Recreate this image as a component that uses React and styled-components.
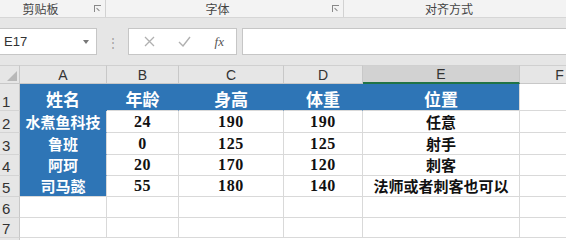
import styled, { createGlobalStyle } from "styled-components";

const GlobalStyle = createGlobalStyle`
  html, body {
    margin: 0;
    padding: 0;
    background: #ffffff;
    overflow: hidden;
  }
`;

const SANS = `"Microsoft YaHei", "Noto Sans CJK SC", "Liberation Sans", sans-serif`;
const BLUE = "#2e75b6";
const GRID = "#d9d9d9";

const columns = [
  { key: "A", width: 87 },
  { key: "B", width: 72 },
  { key: "C", width: 105 },
  { key: "D", width: 79 },
  { key: "E", width: 157 },
  { key: "F", width: 80 },
];

const rows = [
  { n: 1, h: 27, cells: ["姓名", "年龄", "身高", "体重", "位置"] },
  { n: 2, h: 22, cells: ["水煮鱼科技", "24", "190", "190", "任意"] },
  { n: 3, h: 22, cells: ["鲁班", "0", "125", "125", "射手"] },
  { n: 4, h: 21, cells: ["阿珂", "20", "170", "120", "刺客"] },
  { n: 5, h: 21, cells: ["司马懿", "55", "180", "140", "法师或者刺客也可以"] },
  { n: 6, h: 21, cells: [] },
  { n: 7, h: 20, cells: [] },
];

const Page = styled.div`
  width: 566px;
  height: 240px;
  overflow: hidden;
  background: #e6e6e6;
  font-family: ${SANS};
`;

const Ribbon = styled.div`
  display: flex;
  height: 17px;
  background: #f3f3f3;
  border-bottom: 1px solid #d6d6d6;
`;

const Group = styled.div`
  position: relative;
  width: ${(p) => p.width}px;
  flex: none;
  display: flex;
  align-items: center;
  justify-content: center;
  padding-right: ${(p) => p.pad}px;
  box-sizing: border-box;
  border-right: ${(p) => (p.last ? "none" : "1px solid #d2d2d2")};
  font-size: 12px;
  color: #444;
  line-height: 1;
`;

const Launcher = styled.span`
  position: absolute;
  right: 4px;
  top: 5px;
  width: 6px;
  height: 6px;
  border-left: 1px solid #888;
  border-top: 1px solid #888;
  &::after {
    content: "";
    position: absolute;
    left: 1px;
    top: 1px;
    width: 4px;
    height: 1px;
    background: #888;
    transform: translate(0px, 2px) rotate(45deg);
  }
`;

const FormulaBar = styled.div`
  display: flex;
  align-items: stretch;
  height: 27px;
  margin-top: 10px;
  margin-bottom: 10px;
`;

const NameBox = styled.div`
  width: 97px;
  box-sizing: border-box;
  background: #fff;
  border: 1px solid #c6c6c6;
  border-left: none;
  display: flex;
  align-items: center;
  justify-content: space-between;
  padding: 0 7px 0 4px;
  font-family: "Liberation Sans", sans-serif;
  font-size: 13px;
  color: #333;
`;

const Caret = styled.span`
  width: 0;
  height: 0;
  border-left: 3px solid transparent;
  border-right: 3px solid transparent;
  border-top: 4px solid #777;
`;

const Grip = styled.div`
  width: 31px;
  display: flex;
  align-items: center;
  justify-content: center;
  color: #a0a0a0;
  font-size: 12px;
`;

const ActionBox = styled.div`
  width: 109px;
  box-sizing: border-box;
  background: #fff;
  border: 1px solid #c6c6c6;
  display: flex;
  align-items: center;
  justify-content: space-between;
  padding: 0 12px 0 15px;
`;

const FxLabel = styled.span`
  font-family: "Liberation Serif", serif;
  font-style: italic;
  font-size: 13px;
  color: #555;
`;

const FormulaInput = styled.div`
  flex: 1;
  margin-left: 5px;
  background: #fff;
  border: 1px solid #c6c6c6;
  border-right: none;
`;

const Sheet = styled.div`
  display: grid;
  grid-template-columns: 20px ${columns.map((c) => c.width + "px").join(" ")};
  grid-template-rows: 19px ${rows.map((r) => r.h + "px").join(" ")} 1fr;
  height: 176px;
  background: #fff;
`;

const Corner = styled.div`
  position: relative;
  background: #e6e6e6;
  border-right: 1px solid #c8c8c8;
  border-bottom: 1px solid #c8c8c8;
  border-top: 1px solid #d0d0d0;
  &::after {
    content: "";
    position: absolute;
    right: 2px;
    bottom: 2px;
    width: 0;
    height: 0;
    border-left: 10px solid transparent;
    border-bottom: 10px solid #b8b8b8;
  }
`;

const ColHead = styled.div`
  background: ${(p) => (p.selected ? "#d2d2d2" : "#e6e6e6")};
  border-top: 1px solid #d0d0d0;
  border-right: 1px solid #c8c8c8;
  border-bottom: ${(p) => (p.selected ? "2px solid #217346" : "1px solid #c8c8c8")};
  display: flex;
  align-items: center;
  justify-content: center;
  font-family: "Liberation Sans", sans-serif;
  font-size: 14px;
  color: #333;
`;

const RowHead = styled.div`
  background: #e6e6e6;
  border-right: 1px solid #c8c8c8;
  border-bottom: 1px solid #d4d4d4;
  display: flex;
  align-items: flex-end;
  padding-left: 2px;
  padding-bottom: 1px;
  font-family: "Liberation Sans", sans-serif;
  font-size: 15px;
  color: #333;
  line-height: 1;
`;

const Cell = styled.div`
  box-sizing: border-box;
  background: ${(p) => (p.$blue ? BLUE : "#fff")};
  border-right: 1px solid ${(p) => (p.$blue && p.$joinRight ? BLUE : GRID)};
  border-bottom: 1px solid ${(p) => (p.$blue && p.$joinBottom ? BLUE : GRID)};
  display: flex;
  align-items: flex-end;
  justify-content: center;
  padding-bottom: 1px;
  color: ${(p) => (p.$blue ? "#fff" : "#111")};
  font-family: ${(p) => (p.$num ? `"Liberation Serif", serif` : SANS)};
  font-weight: 700;
  font-size: ${(p) => p.$size}px;
  letter-spacing: ${(p) => (p.$num ? "0.6px" : "0")};
  line-height: 1.2;
  white-space: nowrap;
`;

const isNum = (v) => /^\d+$/.test(v);

const App = () => {
  return (
    <>
      <GlobalStyle />
      <Page>
        <Ribbon>
          <Group width={106} pad={24}>
            剪贴板
            <Launcher />
          </Group>
          <Group width={238} pad={14}>
            字体
            <Launcher />
          </Group>
          <Group width={222} pad={12} last>
            对齐方式
          </Group>
        </Ribbon>

        <FormulaBar>
          <NameBox>
            E17
            <Caret />
          </NameBox>
          <Grip>⋮</Grip>
          <ActionBox>
            <svg width="11" height="11" viewBox="0 0 11 11">
              <path d="M1 1 L10 10 M10 1 L1 10" stroke="#b0b0b0" strokeWidth="1.3" fill="none" />
            </svg>
            <svg width="13" height="11" viewBox="0 0 13 11">
              <path d="M1 6 L5 10 L12 1" stroke="#b0b0b0" strokeWidth="1.4" fill="none" />
            </svg>
            <FxLabel>fx</FxLabel>
          </ActionBox>
          <FormulaInput />
        </FormulaBar>

        <Sheet>
          <Corner />
          {columns.map((c) => (
            <ColHead key={c.key} selected={c.key === "E"}>
              {c.key}
            </ColHead>
          ))}
          {rows.map((r) => (
            <RowLine key={r.n} row={r} />
          ))}
          <RowHead />
        </Sheet>
      </Page>
    </>
  );
};

const RowLine = ({ row }) => {
  const header = row.n === 1;
  return (
    <>
      <RowHead>{row.n}</RowHead>
      {columns.map((c, i) => {
        const v = row.cells[i] || "";
        const blue = (header && i < 5) || (i === 0 && row.n <= 5);
        const num = isNum(v);
        let size = 15;
        if (header) size = 17;
        if (num) size = 16;
        return (
          <Cell
            key={c.key}
            $blue={blue}
            $num={num}
            $size={size}
            $joinRight={header && i < 4}
            $joinBottom={i === 0 && row.n < 5}
          >
            {v}
          </Cell>
        );
      })}
    </>
  );
};

export default App;
